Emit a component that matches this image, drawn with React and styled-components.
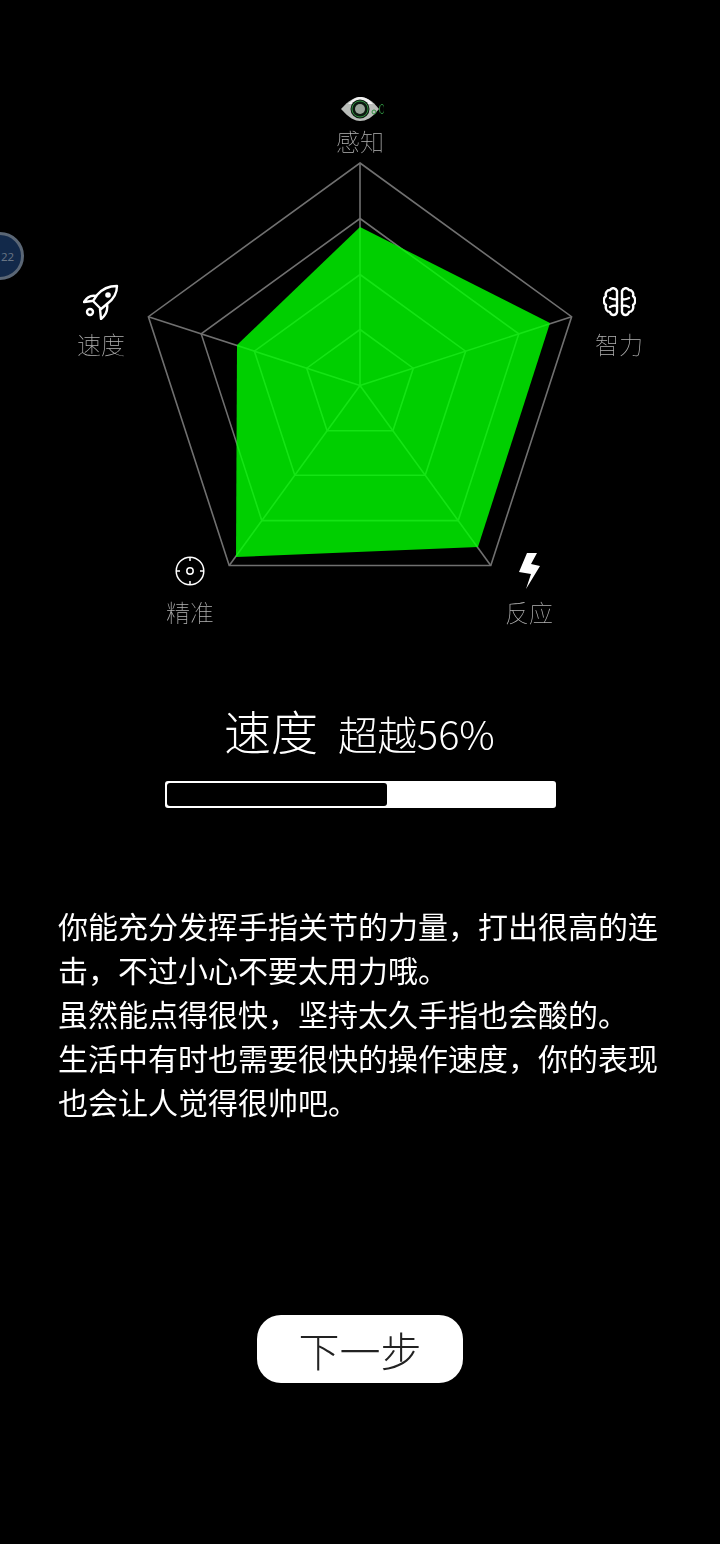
import React from "react";
import styled, { createGlobalStyle } from "styled-components";

const Global = createGlobalStyle`
  html, body { margin: 0; padding: 0; background: #000; }
  body { font-family: "Noto Sans CJK SC", "Noto Sans", sans-serif; font-weight: 300; }
`;

const Page = styled.main`
  position: relative;
  width: 720px;
  height: 1544px;
  overflow: hidden;
  background: #000;
  color: #fff;
  display: flex;
  flex-direction: column;
  align-items: center;
`;

const Radar = styled.section`
  position: relative;
  width: 720px;
  height: 640px;
  flex: none;
`;

const Chart = styled.svg`
  position: absolute;
  inset: 0;
`;

const Axis = styled.div`
  position: absolute;
  left: ${p => p.$x - 60}px;
  top: ${p => p.$y}px;
  width: 120px;
  display: flex;
  flex-direction: column;
  align-items: center;
`;

const IconBox = styled.div`
  height: 44px;
  display: flex;
  align-items: center;
  justify-content: center;
`;

const AxisName = styled.span`
  font-size: 24px;
  line-height: 36px;
  color: #b4b4b4;
  font-weight: 100;
  margin-top: ${p => p.$gap}px;
  will-change: transform;
`;

const Bubble = styled.aside`
  position: absolute;
  left: -24px;
  top: 232px;
  width: 20px;
  height: 42px;
  border: 3px solid #5a6675;
  border-radius: 50%;
  background: #12294a;
  display: flex;
  align-items: center;
  justify-content: flex-start;
  padding-left: 22px;
  box-sizing: content-box;
  color: #667383;
  font-size: 11.5px;
  font-weight: 400;
  font-family: "Noto Sans", sans-serif;
`;

const Heading = styled.h1`
  margin: 56px 0 0;
  height: 68px;
  padding-right: 2px;
  display: flex;
  align-items: baseline;
  gap: 20px;
  font-weight: 300;
  font-size: 47px;
  line-height: 68px;
  will-change: transform;
`;

const Sub = styled.span`
  font-size: 39.5px;
`;

const Track = styled.div`
  margin-top: 17px;
  width: 391px;
  height: 27px;
  box-sizing: border-box;
  padding: 2px;
  background: #fff;
  border-radius: 3px;
`;

const Fill = styled.div`
  height: 100%;
  background: #000;
  border-radius: 3px;
`;

const Body = styled.div`
  margin-top: 95px;
  width: 604px;
  font-size: 30px;
  line-height: 44px;
  font-weight: 400;
  color: #fff;
  will-change: transform;
`;

const Line = styled.p`
  margin: 0;
`;

const Next = styled.button`
  margin-top: 192px;
  width: 206px;
  height: 68px;
  border: 0;
  border-radius: 24px;
  background: #fff;
  padding: 0;
`;

const NextLabel = styled.span`
  display: block;
  color: #222;
  font-family: "Noto Sans CJK SC", sans-serif;
  font-weight: 200;
  font-size: 41px;
  line-height: 68px;
  will-change: transform;
`;

const cx = 360, cy = 385.5;
const ang = [-90, -18, 54, 126, 198].map(a => (a * Math.PI) / 180);
const pts = r => ang.map(a => `${(cx + r * Math.cos(a)).toFixed(1)},${(cy + r * Math.sin(a)).toFixed(1)}`).join(" ");
const rings = [222.5, 167, 111, 56];
const data = "360,227 550,323 478,547 236,557 237,345";

const paragraphs = [
  "\u4f60\u80fd\u5145\u5206\u53d1\u6325\u624b\u6307\u5173\u8282\u7684\u529b\u91cf\uFF0C\u6253\u51fa\u5f88\u9ad8\u7684\u8fde\u51fb\uFF0C\u4e0d\u8fc7\u5c0f\u5fc3\u4e0d\u8981\u592a\u7528\u529b\u54e6\u3002",
  "\u867d\u7136\u80fd\u70b9\u5f97\u5f88\u5feb\uFF0C\u575a\u6301\u592a\u4e45\u624b\u6307\u4e5f\u4f1a\u9178\u7684\u3002",
  "\u751f\u6d3b\u4e2d\u6709\u65f6\u4e5f\u9700\u8981\u5f88\u5feb\u7684\u64cd\u4f5c\u901f\u5ea6\uFF0C\u4f60\u7684\u8868\u73b0\u4e5f\u4f1a\u8ba9\u4eba\u89c9\u5f97\u5f88\u5e05\u5427\u3002",
];

const Eye = () => (
  <svg width="48" height="26" viewBox="-5 0 48 26">
    <path d="M0 13 C8 4 14 1 19 1 C25 1 31 4 38 13 C31 22 25 25 19 25 C14 25 8 22 0 13Z" fill="#b9bdb9" />
    <path d="M7 8 C12 3 15 1 19 1 C24 1 28 3 32 8Z" fill="#f2f2f2" />
    <circle cx="19" cy="13" r="9.5" fill="#0d1a10" />
    <circle cx="19" cy="13" r="5" fill="#9aa59a" />
    <circle cx="19" cy="13" r="8" fill="none" stroke="#2f8f3f" strokeWidth="1" />
    <circle cx="33" cy="16" r="2" fill="none" stroke="#2f8f3f" strokeWidth="1" />
    <ellipse cx="41" cy="13" rx="2.5" ry="4.5" fill="none" stroke="#2f8f3f" strokeWidth="1" />
  </svg>
);

const RocketIcon = () => (
  <svg width="36" height="36" viewBox="0 0 36 36" fill="none" stroke="#fff" strokeWidth="2.4" strokeLinejoin="round" strokeLinecap="round">
    <path d="M34 2 C26 2 19 5 14 11 L10 17 L18 25 L24 20 C31 15 34 9 34 2Z" />
    <path d="M13 12 C8 11 4 13 1 18 L9 17" />
    <path d="M24 20 C25 26 23 31 18 35 L17 25" />
    <circle cx="25" cy="11" r="1.6" fill="#fff" />
    <circle cx="7" cy="28" r="3" />
  </svg>
);

const BrainIcon = () => (
  <svg width="33" height="30" viewBox="0 0 33 30" fill="none" stroke="#fff" strokeWidth="2.4" strokeLinecap="round" strokeLinejoin="round">
    <path d="M14 4 C13 1 9 0 7 3 C4 3 2 6 3 9 C0 11 0 16 3 18 C2 22 4 25 7 25 C8 29 13 29 14 25Z" />
    <path d="M19 4 C20 1 24 0 26 3 C29 3 31 6 30 9 C33 11 33 16 30 18 C31 22 29 25 26 25 C25 29 20 29 19 25Z" />
    <path d="M14 12 C11 13 9 12 7 11 M14 19 C11 18 9 19 7 20" />
    <path d="M19 12 C22 13 24 12 26 11 M19 19 C22 18 24 19 26 20" />
  </svg>
);

const TargetIcon = () => (
  <svg width="30" height="30" viewBox="0 0 30 30" fill="none" stroke="#fff" strokeWidth="1.5">
    <circle cx="15" cy="15" r="13.8" />
    <circle cx="15" cy="15" r="3.2" />
    <path d="M15 1 V5 M15 25 V29 M1 15 H5 M25 15 H29" />
  </svg>
);

const BoltIcon = () => (
  <svg width="22" height="36" viewBox="0 0 22 36">
    <path d="M9 0 L19 0 L13 11 L22 13 L8 36 L13 21 L1 19Z" fill="#fff" />
  </svg>
);

export default function App() {
  return (
    <Page>
      <Global />
      <Bubble>22</Bubble>
      <Radar>
        <Chart width="720" height="640" viewBox="0 0 720 640">
          <g fill="none" stroke="#707070" strokeWidth="1.6">
            {rings.map(r => <polygon key={r} points={pts(r)} />)}
            {ang.map((a, i) => (
              <line key={i} x1={cx} y1={cy} x2={cx + 222.5 * Math.cos(a)} y2={cy + 222.5 * Math.sin(a)} />
            ))}
          </g>
          <polygon points={data} fill="rgb(0,255,0)" fillOpacity="0.81" />
        </Chart>
        <Axis $x={360} $y={87}><IconBox><Eye /></IconBox><AxisName $gap={-8}>感知</AxisName></Axis>
        <Axis $x={101} $y={280}><IconBox><RocketIcon /></IconBox><AxisName $gap={2}>速度</AxisName></Axis>
        <Axis $x={619} $y={280}><IconBox><BrainIcon /></IconBox><AxisName $gap={2}>智力</AxisName></Axis>
        <Axis $x={190} $y={549}><IconBox><TargetIcon /></IconBox><AxisName $gap={1}>精准</AxisName></Axis>
        <Axis $x={529} $y={549}><IconBox><BoltIcon /></IconBox><AxisName $gap={1}>反应</AxisName></Axis>
      </Radar>
      <Heading>速度<Sub>超越56%</Sub></Heading>
      <Track><Fill style={{ width: "57%" }} /></Track>
      <Body>
        {paragraphs.map(text => <Line key={text}>{text}</Line>)}
      </Body>
      <Next><NextLabel>下一步</NextLabel></Next>
    </Page>
  );
}
